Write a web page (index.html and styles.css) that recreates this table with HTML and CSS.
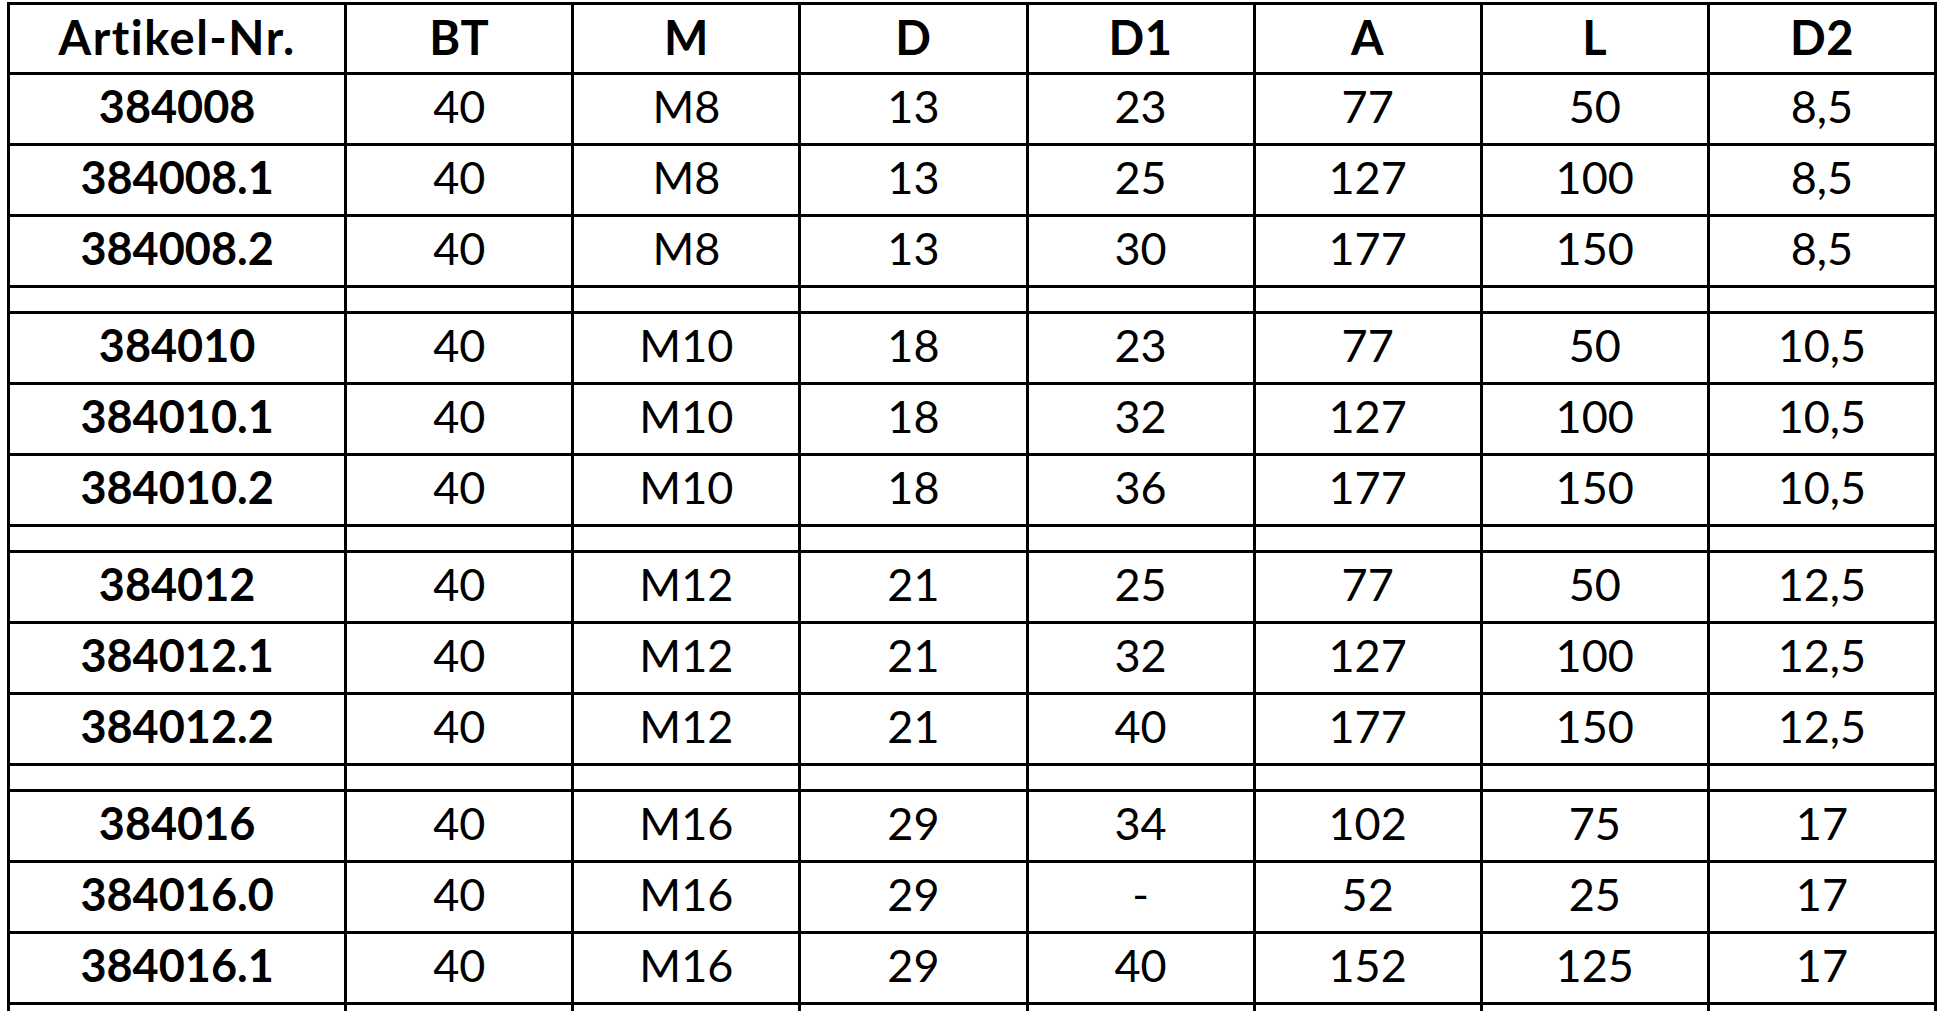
FILE: index.html
```html
<!DOCTYPE html>
<html lang="de">
<head>
<meta charset="utf-8">
<title>Artikeltabelle</title>
<link rel="stylesheet" href="styles.css">
</head>
<body>
<table class="spec">
  <colgroup>
    <col class="c-first">
    <col class="c-num"><col class="c-num"><col class="c-num"><col class="c-num">
    <col class="c-num"><col class="c-num"><col class="c-num">
  </colgroup>
  <thead>
    <tr class="head"><th>Artikel-Nr.</th><th>BT</th><th>M</th><th>D</th><th>D1</th><th>A</th><th>L</th><th>D2</th></tr>
  </thead>
  <tbody>
    <tr><th>384008</th><td>40</td><td>M8</td><td>13</td><td>23</td><td>77</td><td>50</td><td>8,5</td></tr>
    <tr><th>384008.1</th><td>40</td><td>M8</td><td>13</td><td>25</td><td>127</td><td>100</td><td>8,5</td></tr>
    <tr><th>384008.2</th><td>40</td><td>M8</td><td>13</td><td>30</td><td>177</td><td>150</td><td>8,5</td></tr>
    <tr class="gap"><th></th><td></td><td></td><td></td><td></td><td></td><td></td><td></td></tr>
    <tr><th>384010</th><td>40</td><td>M10</td><td>18</td><td>23</td><td>77</td><td>50</td><td>10,5</td></tr>
    <tr><th>384010.1</th><td>40</td><td>M10</td><td>18</td><td>32</td><td>127</td><td>100</td><td>10,5</td></tr>
    <tr><th>384010.2</th><td>40</td><td>M10</td><td>18</td><td>36</td><td>177</td><td>150</td><td>10,5</td></tr>
    <tr class="gap"><th></th><td></td><td></td><td></td><td></td><td></td><td></td><td></td></tr>
    <tr><th>384012</th><td>40</td><td>M12</td><td>21</td><td>25</td><td>77</td><td>50</td><td>12,5</td></tr>
    <tr><th>384012.1</th><td>40</td><td>M12</td><td>21</td><td>32</td><td>127</td><td>100</td><td>12,5</td></tr>
    <tr><th>384012.2</th><td>40</td><td>M12</td><td>21</td><td>40</td><td>177</td><td>150</td><td>12,5</td></tr>
    <tr class="gap"><th></th><td></td><td></td><td></td><td></td><td></td><td></td><td></td></tr>
    <tr><th>384016</th><td>40</td><td>M16</td><td>29</td><td>34</td><td>102</td><td>75</td><td>17</td></tr>
    <tr><th>384016.0</th><td>40</td><td>M16</td><td>29</td><td>-</td><td>52</td><td>25</td><td>17</td></tr>
    <tr><th>384016.1</th><td>40</td><td>M16</td><td>29</td><td>40</td><td>152</td><td>125</td><td>17</td></tr>
    <tr><th></th><td></td><td></td><td></td><td></td><td></td><td></td><td></td></tr>
  </tbody>
</table>
</body>
</html>
```
FILE: styles.css
```css
html, body {
  margin: 0;
  padding: 0;
  background: #ffffff;
}

body {
  padding: 2px 0 0 7px;
  font-family: Lato, "Noto Sans", sans-serif;
  color: #000000;
}

.spec {
  border-collapse: separate;
  border-spacing: 0;
  table-layout: fixed;
  width: 1930px;
  border-top: 3px solid #000;
  border-left: 3px solid #000;
}

.c-first { width: 337px; }
.c-num { width: 227px; }

.spec th,
.spec td {
  padding: 0 0 5px 0;
  border-right: 3px solid #000;
  border-bottom: 3px solid #000;
  text-align: center;
  vertical-align: middle;
  font-size: 45px;
  line-height: 63px;
  height: 63px;
  box-sizing: content-box;
  white-space: nowrap;
  overflow: hidden;
}

.spec th {
  font-weight: 700;
}

.spec td {
  font-weight: 400;
}

.spec .head th {
  font-size: 47px;
  letter-spacing: 0.5px;
  padding-bottom: 3px;
  line-height: 64px;
  height: 64px;
}

.spec .head th:first-child {
  letter-spacing: 1.5px;
}

.spec .gap th,
.spec .gap td {
  padding: 0;
  line-height: 23px;
  height: 23px;
}
```
